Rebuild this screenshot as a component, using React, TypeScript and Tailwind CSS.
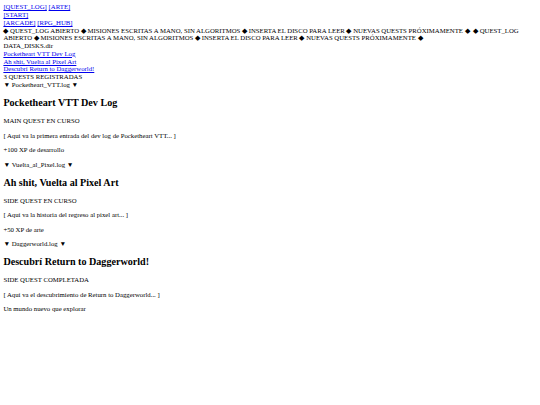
const marquee =
  '◆ QUEST_LOG ABIERTO ◆ MISIONES ESCRITAS A MANO, SIN ALGORITMOS ◆ INSERTA EL DISCO PARA LEER ◆ NUEVAS QUESTS PRÓXIMAMENTE ◆'

const quests = [
  {
    file: 'Pocketheart_VTT.log',
    title: 'Pocketheart VTT Dev Log',
    status: 'MAIN QUEST EN CURSO',
    body: '[ Aquí va la primera entrada del dev log de Pocketheart VTT... ]',
    reward: '+100 XP de desarrollo',
  },
  {
    file: 'Vuelta_al_Pixel.log',
    title: 'Ah shit, Vuelta al Pixel Art',
    status: 'SIDE QUEST EN CURSO',
    body: '[ Aquí va la historia del regreso al pixel art... ]',
    reward: '+50 XP de arte',
  },
  {
    file: 'Daggerworld.log',
    title: 'Descubrí Return to Daggerworld!',
    status: 'SIDE QUEST COMPLETADA',
    body: '[ Aquí va el descubrimiento de Return to Daggerworld... ]',
    reward: 'Un mundo nuevo que explorar',
  },
]

const link = 'text-[#0000ee] underline'

export default function App() {
  return (
    <div className="p-[3.375px] font-['Liberation_Serif',serif] text-[6.75px] leading-[1.149] text-black bg-white min-h-[405px]">
      <nav>
        <div>
          <a href="#" className={link}>[QUEST_LOG]</a> <a href="#" className={link}>[ARTE]</a>
        </div>
        <div>
          <a href="#" className={link}>[START]</a>
        </div>
        <div>
          <a href="#" className={link}>[ARCADE]</a> <a href="#" className={link}>[RPG_HUB]</a>
        </div>
      </nav>

      <div>
        <span>{marquee}</span>{'\u00a0 '}<span>{marquee}</span>
      </div>

      <div>DATA_DISKS.dir</div>
      {quests.map((q) => (
        <div key={q.file}>
          <a href="#" className={link}>{q.title}</a>
        </div>
      ))}
      <div>3 QUESTS REGISTRADAS</div>

      {quests.map((q) => (
        <section key={q.file}>
          <div>▼ {q.file} ▼</div>
          <h2 className="text-[1.5em] leading-[1.149] font-bold my-[0.83em]">{q.title}</h2>
          <p className="my-[1em]">{q.status}</p>
          <p className="my-[1em]">{q.body}</p>
          <p className="my-[1em]">{q.reward}</p>
        </section>
      ))}
    </div>
  )
}
